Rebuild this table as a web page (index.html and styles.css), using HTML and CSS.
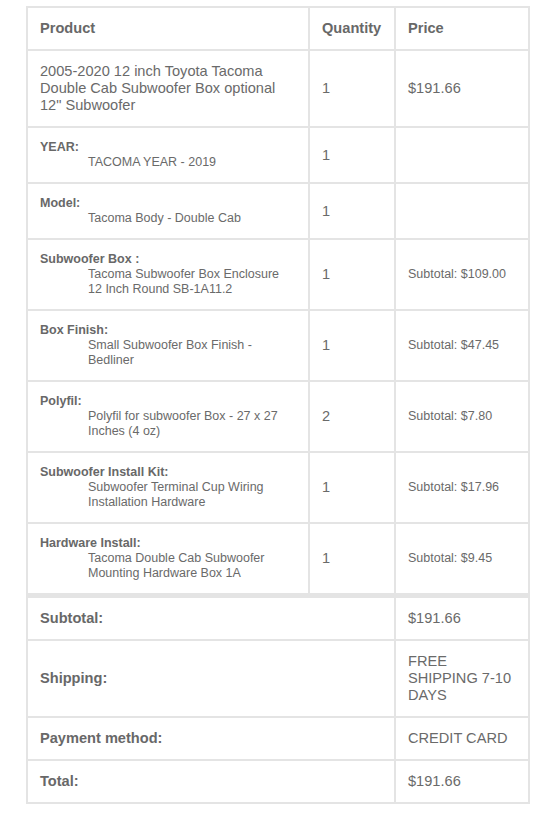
FILE: index.html
```html
<!DOCTYPE html>
<html lang="en">
<head>
<meta charset="utf-8">
<title>Order details</title>
<link rel="stylesheet" href="styles.css">
</head>
<body>
<div class="wrap">
<table class="order">
  <thead>
    <tr>
      <th class="c1">Product</th>
      <th class="c2">Quantity</th>
      <th class="c3">Price</th>
    </tr>
  </thead>
  <tbody>
    <tr>
      <td>2005-2020 12 inch Toyota Tacoma Double Cab Subwoofer Box optional 12" Subwoofer</td>
      <td>1</td>
      <td>$191.66</td>
    </tr>
    <tr class="meta">
      <td><div class="label">YEAR:</div><div class="value">TACOMA YEAR - 2019</div></td>
      <td class="qty">1</td>
      <td></td>
    </tr>
    <tr class="meta">
      <td><div class="label">Model:</div><div class="value">Tacoma Body - Double Cab</div></td>
      <td class="qty">1</td>
      <td></td>
    </tr>
    <tr class="meta">
      <td><div class="label">Subwoofer Box :</div><div class="value">Tacoma Subwoofer Box Enclosure 12 Inch Round SB-1A11.2</div></td>
      <td class="qty">1</td>
      <td class="sub">Subtotal: $109.00</td>
    </tr>
    <tr class="meta">
      <td><div class="label">Box Finish:</div><div class="value">Small Subwoofer Box Finish - Bedliner</div></td>
      <td class="qty">1</td>
      <td class="sub">Subtotal: $47.45</td>
    </tr>
    <tr class="meta">
      <td><div class="label">Polyfil:</div><div class="value">Polyfil for subwoofer Box - 27 x 27 Inches (4 oz)</div></td>
      <td class="qty">2</td>
      <td class="sub">Subtotal: $7.80</td>
    </tr>
    <tr class="meta">
      <td><div class="label">Subwoofer Install Kit:</div><div class="value">Subwoofer Terminal Cup Wiring Installation Hardware</div></td>
      <td class="qty">1</td>
      <td class="sub">Subtotal: $17.96</td>
    </tr>
    <tr class="meta">
      <td><div class="label">Hardware Install:</div><div class="value">Tacoma Double Cab Subwoofer Mounting Hardware Box 1A</div></td>
      <td class="qty">1</td>
      <td class="sub">Subtotal: $9.45</td>
    </tr>
  </tbody>
  <tfoot>
    <tr class="first">
      <th colspan="2">Subtotal:</th>
      <td>$191.66</td>
    </tr>
    <tr>
      <th colspan="2">Shipping:</th>
      <td>FREE SHIPPING 7-10 DAYS</td>
    </tr>
    <tr>
      <th colspan="2">Payment method:</th>
      <td>CREDIT CARD</td>
    </tr>
    <tr>
      <th colspan="2">Total:</th>
      <td>$191.66</td>
    </tr>
  </tfoot>
</table>
</div>
</body>
</html>
```
FILE: styles.css
```css
html, body {
  margin: 0;
  padding: 0;
  background: #ffffff;
}

.wrap {
  padding: 6px 0 0 26px;
}

.order {
  width: 504px;
  table-layout: fixed;
  border-collapse: separate;
  border-spacing: 0;
  border: 1px solid #e4e4e4;
  font-family: "Liberation Sans", Arial, Helvetica, sans-serif;
  font-size: 14.6px;
  line-height: 17px;
  color: #6a6a6a;
}

.order th,
.order td {
  box-sizing: border-box;
  border: 1px solid #e4e4e4;
  padding: 12px;
  text-align: left;
  vertical-align: middle;
}

.order th {
  font-weight: bold;
  color: #686868;
}

.order .c1 { width: 282px; }
.order .c2 { width: 86px; }
.order .c3 { width: 134px; }

.meta .label {
  font-size: 12.5px;
  line-height: 15px;
  font-weight: bold;
  color: #686868;
}

.meta .value {
  font-size: 12.5px;
  line-height: 15px;
  margin-left: 48px;
}

.meta .sub {
  font-size: 12.5px;
  line-height: 15px;
}

tfoot th,
tfoot td {
  padding-bottom: 13px;
}

tfoot .first th,
tfoot .first td {
  border-top-width: 4px;
}
```
